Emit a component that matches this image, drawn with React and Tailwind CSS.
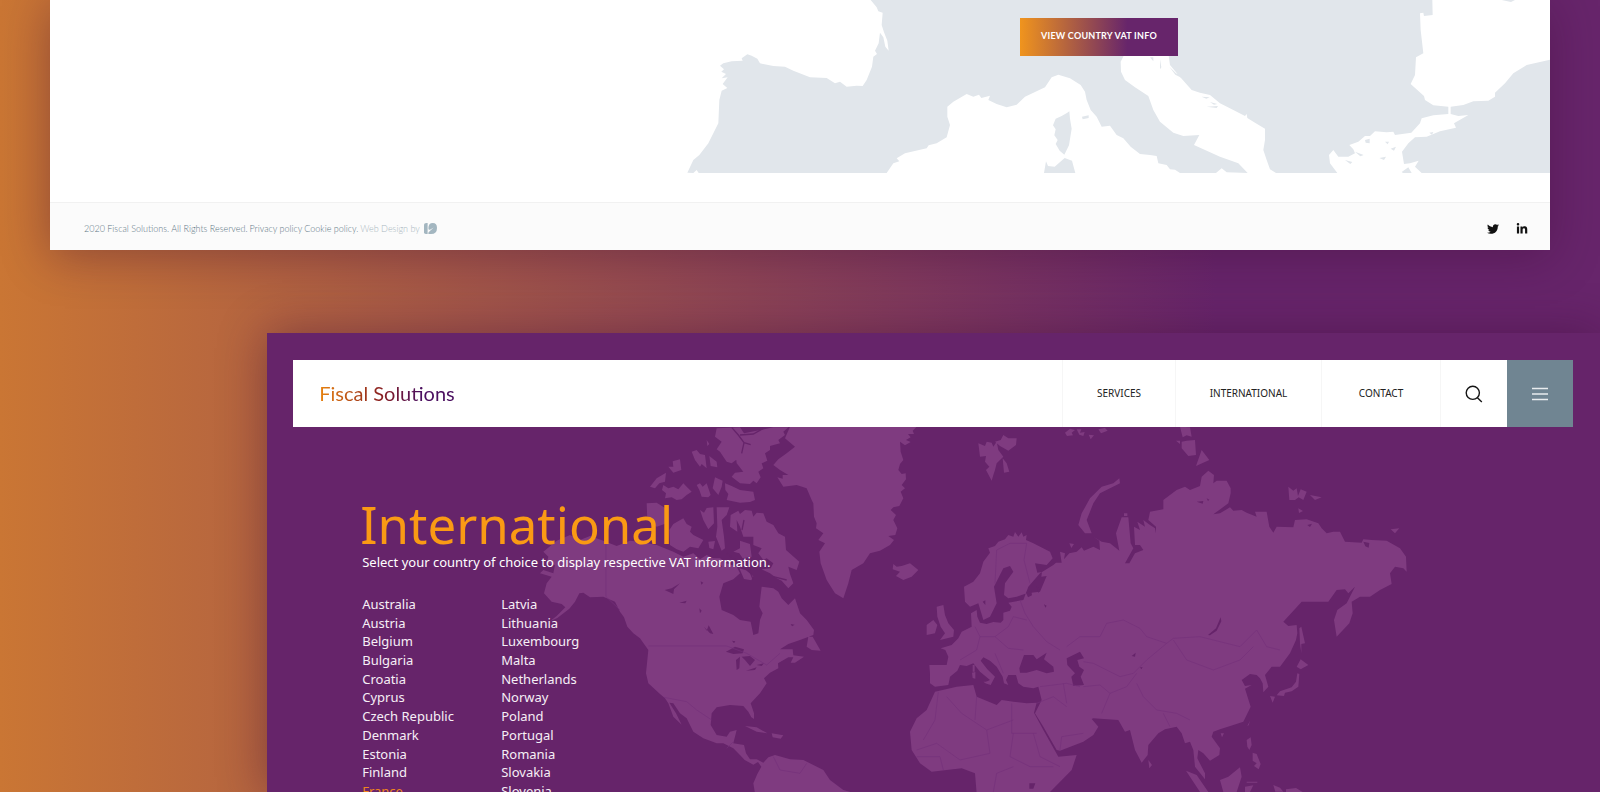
import { FaTwitter, FaLinkedinIn } from "react-icons/fa";

const countries = [
  [
    "Australia",
    "Austria",
    "Belgium",
    "Bulgaria",
    "Croatia",
    "Cyprus",
    "Czech Republic",
    "Denmark",
    "Estonia",
    "Finland",
    "France",
  ],
  [
    "Latvia",
    "Lithuania",
    "Luxembourg",
    "Malta",
    "Netherlands",
    "Norway",
    "Poland",
    "Portugal",
    "Romania",
    "Slovakia",
    "Slovenia",
  ],
];

const navItems = [
  { label: "SERVICES", width: "w-[113px]" },
  { label: "INTERNATIONAL", width: "w-[146px]" },
  { label: "CONTACT", width: "w-[119px]" },
];

export default function App() {
  return (
    <div className="flex h-screen flex-col overflow-hidden bg-[linear-gradient(90deg,#ca7634_0%,#67256b_76%)] font-['Noto_Sans',sans-serif]">
      <VatSection />
      <InternationalSection />
    </div>
  );
}

function VatSection() {
  return (
    <section className="mx-[50px] shrink-0 bg-white shadow-[0_6px_44px_rgba(60,10,50,0.38)]">
      <div className="relative h-[173px] overflow-hidden">
        <EuropeMap />
        <div className="relative flex justify-end pt-[18px] pr-[372px]">
          <button className="h-[38px] w-[158px] bg-[linear-gradient(90deg,#f0941d_0%,#67256b_68%)] pb-[3px] text-[9px] font-bold tracking-wide whitespace-nowrap text-white font-['Lato','Noto_Sans',sans-serif]">
            VIEW COUNTRY VAT INFO
          </button>
        </div>
      </div>

      <footer className="mt-[29px] flex h-12 items-center justify-between border-t border-[#f1f1f1] bg-[#fbfbfb] pr-[22px] pl-[34px] pt-1">
        <p className="flex items-center gap-0.5 text-[9px] leading-4 text-[#5f7886] font-['Lato','Noto_Sans',sans-serif]">
          <span className="font-light">2020 Fiscal Solutions. All Rights Reserved.</span>
          <a href="#privacy" className="font-light">Privacy policy</a>
          <a href="#cookies" className="font-light">Cookie policy.</a>
          <span className="font-light text-[#a9b7c0]">Web Design by</span>
          <StudioMark />
        </p>
        <div className="flex items-center gap-[17px] text-[#111111]">
          <a href="#twitter" aria-label="Twitter">
            <FaTwitter size={12} />
          </a>
          <a href="#linkedin" aria-label="LinkedIn">
            <FaLinkedinIn size={12} />
          </a>
        </div>
      </footer>
    </section>
  );
}

function InternationalSection() {
  return (
    <section className="relative mt-[83px] ml-[16.7%] min-h-0 flex-1 bg-[#66246a] pt-[27px] pr-[27px] pl-[26px] shadow-[0_0_44px_rgba(60,10,50,0.42)]">
      <WorldMap />

      <header className="relative flex h-[67px] items-stretch bg-white">
        <a href="#home" className="flex flex-1 items-center pb-0.5 pl-[26px]">
          <span className="bg-[linear-gradient(90deg,#e8830f_0%,#8a1f1f_45%,#4b1060_75%)] bg-clip-text text-[20px] leading-6 text-transparent font-['Lato',sans-serif]">
            Fiscal Solutions
          </span>
        </a>
        <nav className="flex">
          {navItems.map((item) => (
            <a
              key={item.label}
              href="#nav"
              className={`flex items-center justify-center border-l border-[#f6f6f6] text-[10px] text-[#222222] ${item.width}`}
            >
              {item.label}
            </a>
          ))}
        </nav>
        <button aria-label="Search" className="flex w-[67px] items-center justify-center border-l border-[#f6f6f6]">
          <svg width="18" height="18" viewBox="0 0 18 18" fill="none" stroke="#151515" strokeWidth="1.4">
            <circle cx="7.8" cy="7.8" r="6.6" />
            <path d="M12.2 12.6l4.6 4.4" />
          </svg>
        </button>
        <button aria-label="Menu" className="flex w-[66px] items-center justify-center bg-[#708592]">
          <svg width="16" height="14" viewBox="0 0 16 14" stroke="#e8ecee" strokeWidth="1.5">
            <path d="M0 1.5h16M0 7h16M0 12.5h16" />
          </svg>
        </button>
      </header>

      <div className="relative pt-[69px] pl-[69px]">
        <h1 className="-ml-0.5 text-[51px] leading-[56px] text-[#fa9a14]">International</h1>
        <p className="text-[13px] leading-5 text-white">
          Select your country of choice to display respective VAT information.
        </p>
        <div className="mt-[23px] flex">
          {countries.map((column) => (
            <ul key={column[0]} className="flex h-[205px] w-[139px] flex-col justify-between text-[13px] leading-[18px]">
              {column.map((country) => (
                <li key={country}>
                  <a
                    href="#country"
                    className={country === "France" ? "text-[#f0861c]" : "text-[#f6eff6]"}
                  >
                    {country}
                  </a>
                </li>
              ))}
            </ul>
          ))}
        </div>
      </div>
    </section>
  );
}

function StudioMark() {
  return (
    <svg className="ml-0.5" width="13" height="11" viewBox="0 0 13 11" fill="#a3b6c0">
      <path d="M0 2.4Q0 0 2.6 0H3.6V11H1.8Q0 11 0 9.2z" />
      <path d="M4.4 5.2Q4.4 0 8.8 0Q13 0 13 5Q13 11 7 11H4.4V9.4L9.6 4.6L6.4 6.6Q4.4 7.4 4.4 5.2z" />
    </svg>
  );
}

function EuropeMap() {
  return (
    <svg
      className="absolute inset-0 h-full w-full"
      viewBox="50 0 1500 173"
      preserveAspectRatio="xMaxYMax slice"
      aria-hidden="true"
    >
      <g transform="translate(660 0) scale(0.33333)">
        <path
          fill="#e1e6eb"
          d="M632 0L650 22L655 34L668 38L665 75L672 97L682 122L686 152L676 140L670 112L660 98L656 130L645 152L651 162L640 170L636 200L620 240L608 258L590 257L560 260L540 245L525 250L500 234L450 232L400 212L375 200L340 198L300 190L292 176L275 167L262 163L245 175L248 182L215 184L190 190L180 197L192 208L184 215L198 222L185 235L203 232L188 252L202 264L185 272L178 300L175 370L160 400L145 430L118 465L100 480L82 518L100 519L110 510L116 519L680 519L700 490L718 484L710 475L735 460L800 445L806 436L830 430L860 412L870 375L862 350L862 320L880 305L920 282L940 290L957 284L964 294L990 287L985 300L1010 312L1040 322L1070 314L1095 290L1155 262L1175 232L1195 224L1230 235L1262 255L1275 275L1280 300L1292 330L1310 350L1325 380L1350 377L1370 405L1390 415L1412 440L1440 462L1470 465L1490 468L1495 490L1520 495L1530 508L1545 509L1560 519L1668 519L1685 505L1700 517L1763 519L1735 490L1680 470L1602 435L1618 405L1570 408L1540 398L1500 365L1480 330L1465 288L1425 262L1395 240L1383 215L1382 185L1395 160L1525 160L1530 195L1555 225L1595 270L1620 278L1650 285L1680 310L1720 330L1755 348L1760 342L1762 354L1785 368L1815 386L1815 420L1810 450L1820 480L1830 508L1848 519L2032 519L2010 490L2007 465L2020 450L2035 470L2065 470L2085 460L2080 448L2068 435L2095 425L2115 408L2130 408L2145 394L2180 397L2200 395L2205 405L2254 398L2280 370L2285 355L2320 346L2365 342L2365 320L2320 316L2295 300L2292 288L2252 252L2265 225L2268 172L2290 160L2282 90L2280 40L2290 38L2292 48L2318 45L2317 0Z M2372 320L2410 315L2440 304L2485 302L2505 290L2505 278L2535 250L2560 220L2600 195L2700 172L2700 519L2285 519L2265 500L2276 482L2250 490L2232 492L2226 455L2245 430L2265 412L2300 410L2340 394L2388 383L2382 370L2425 345L2395 348L2372 342Z"
        />
        <path
          fill="#e1e6eb"
          d="M1222 338l6-4 2 22 5 30-8 50-14 28-14-12-12-20 6-12-10-14 4-18-8-12 8-20 18-8zM1158 484l6 14 20 2 30-26 22 8 10 37h-94zM1266 350l20-4v8l-18 4zM1500 178l4 24-4 6zM1470 172h10v12zM1528 200l20 20 24 10-2 6-24-12zM1625 290l24 2-10 4zM1628 304l26 4M1640 320l34-2-4 6zM1650 306l22 6-10 2zM2115 420l14-4v14l-12-2zM2175 425h12l-4 8zM2085 455l26 10-10 4zM2055 480l22 6-6 6zM2158 474l20-4-6 10zM2192 446l16-6-6 12zM2225 516l20-14 10 17h-26zM2308 398l12-2-4 8zM2525 0h40l-12 6z"
        />
      </g>
    </svg>
  );
}

function WorldMap() {
  return (
    <svg
      className="absolute inset-0 h-full w-full"
      viewBox="267 333 1333 459"
      preserveAspectRatio="xMinYMin slice"
      aria-hidden="true"
    >
      {/* Americas, Greenland and Iceland */}
      <g transform="translate(540 420) scale(0.33333)">
        <path
          fill="#7f3b80"
          d="M10 395L25 410L20 430L45 435L40 460L10 450L0 460L35 470L20 490L12 520L35 545L65 552L76 562L50 588L30 604L52 594L88 566L105 545L118 520L130 518L150 532L190 530L225 545L240 575L252 592L262 620L280 640L300 655L325 690L322 720L318 760L325 790L360 822L375 835L385 850L400 890L425 914L408 880L388 848L400 850L420 880L440 895L460 935L490 955L530 970L550 970L580 985L600 1005L614 1020L640 1034L654 1026L664 1040L652 1062L640 1090L645 1120L945 1120L910 1110L870 1080L850 1050L790 1020L750 1018L705 1005L685 1012L670 1028L650 1018L630 1018L618 1000L612 975L580 970L590 930L570 935L560 950L530 945L512 915L515 880L530 862L570 855L610 858L625 875L634 892L642 897L642 880L632 850L660 820L680 790L672 775L690 758L715 745L714 730L745 712L760 712L752 728L765 728L792 710L760 706L758 688L720 688L745 672L780 660L820 645L822 630L800 600L780 580L765 535L745 555L725 535L715 515L700 505L665 500L662 525L658 560L668 580L660 600L655 640L640 645L632 605L600 600L580 585L545 570L538 530L550 490L580 478L600 460L590 440L560 430L540 415L520 415L500 405L480 418L460 400L430 410L400 395L350 375L300 365L270 362L230 378L190 362L150 348L120 360L90 345L50 362Z M805 650L818 650L842 692L815 690L800 680Z M615 918L650 922L682 940L650 935Z M695 940L730 946L722 956L698 952Z"
        />
        <path
          fill="#7f3b80"
          d="M750 20L1130 20L1118 32L1122 42L1104 42L1112 52L1098 60L1112 66L1095 76L1080 65L1082 95L1090 120L1080 132L1075 150L1085 162L1097 160L1098 178L1085 195L1095 205L1082 215L1090 235L1078 258L1060 262L1052 270L1068 285L1060 300L1072 325L1066 345L1045 348L1062 360L1050 375L1020 392L990 400L970 430L935 450L925 490L910 535L885 520L860 480L842 430L838 395L855 370L835 360L850 340L828 325L830 310L822 290L820 250L815 240L800 205L770 195L730 200L712 172L728 176L728 165L745 165L720 150L700 135L715 118L740 100L765 80L735 55Z M1060 432L1070 440L1085 438L1110 430L1135 450L1115 470L1090 480L1068 468L1080 455L1058 448Z"
        />
        {/* Arctic archipelago */}
        <path
          fill="#7f3b80"
          d="M530 25L600 22L612 40L700 22L745 22L730 35L735 45L715 60L720 70L690 78L690 90L675 100L682 122L665 130L670 145L655 155L662 172L650 190L640 182L630 192L600 190L575 170L585 158L610 155L590 130L588 112L605 95L595 115L575 130L560 125L540 95L530 88L545 65L525 50Z M555 190L575 198L600 210L640 215L645 240L630 246L600 248L560 240L565 222L556 210Z M320 250L350 248L385 270L380 310L350 320L322 300Z M388 330L400 312L430 295L440 312L455 320L450 335L460 345L490 360L475 385L450 380L430 395L410 388L390 375Z M480 270L492 278L500 264L520 262L522 310L505 328L490 300Z M530 262L568 262L560 285L545 300L552 350L555 385L545 392L528 350L532 320Z M570 320L572 285L595 272L600 282L615 270L635 272L640 290L650 278L670 280L680 305L700 315L715 340L735 350L738 390L778 425L770 450L745 440L750 462L760 490L745 505L725 482L710 475L690 460L665 448L692 445L700 430L680 415L670 420L655 400L665 385L640 375L640 350L610 350L600 320L590 300L592 335Z M600 362L630 372L635 410L608 415L598 400L580 395L600 385Z M330 200L350 175L378 158L375 185L358 190L345 205Z M370 195L385 205L400 200L415 208L430 190L440 200L455 215L440 225L425 238L410 240L395 232L375 235L378 220L366 210Z M470 195L480 190L488 200L500 190L512 225L505 232L485 230L478 210Z M455 95L470 90L480 102L495 105L500 145L485 132L480 140L465 120Z M385 140L400 140L398 124L420 118L424 150L400 158Z M508 108L530 125L532 142L512 138Z M525 172L548 182L545 200L535 225L518 205Z M500 60l8 12-6 6zM505 365l20-2-5 25-12-4zM598 445l20 6 22 18-6 12-22-4z"
        />
        {/* fjords and channels */}
        <path
          fill="none"
          stroke="#66246a"
          strokeWidth="4"
          d="M575 22L595 45L612 68L605 100M600 45L640 42L670 25M612 68L632 74M612 300L606 330M520 420L545 440M560 400L600 430L650 420M620 430L640 480M700 470L740 480"
        />
        {/* Great Lakes and northern lakes */}
        <path
          fill="#66246a"
          d="M558 695L585 680L612 688L608 700L580 702ZM590 750L588 720L600 710L598 745ZM605 710L630 708L645 720L630 738L615 720ZM618 752L650 742L645 750ZM650 735L672 730L665 738ZM374 510L395 505L420 490L402 508L400 522ZM418 548L440 542L436 550ZM492 620L500 632L506 616L520 642L510 640ZM478 565L485 572L480 580ZM482 484l8 4-6 6zM752 612l12 2-8 5zM576 662l10 2-4 6z"
        />
        <path
          fill="none"
          stroke="#74317a"
          strokeWidth="2"
          d="M198 370V530L240 570M325 678H560L620 700L680 735L720 700M372 832L440 845L470 870L515 900M560 985L580 965M700 1010L720 1050L780 1060L800 1030"
        />
      </g>

      {/* Europe, Asia and Africa */}
      <g transform="translate(880 420) scale(0.33333)">
        <path
          fill="#7f3b80"
          d="M252 500L255 545L270 560L295 550L310 600L330 590L350 550L342 500L370 445L390 438L400 455L375 490L372 525L385 535L410 530L440 520L480 515L500 468L484 470L486 456L472 458L465 430L500 435L518 415L510 395L460 370L438 360L440 345L430 350L425 337L415 350L405 336L400 350L385 345L375 358L355 365L345 378L325 385L330 398L310 425L300 460L280 485Z M148 735L200 735L205 710L196 690L182 685L215 675L235 655L245 635L275 620L273 580L290 570L292 590L300 608L320 612L340 606L362 608L370 600L370 578L390 572L395 560L385 548L430 540L445 500L480 460L520 435L528 428L545 428L540 395L555 400L552 418L568 400L590 395L605 382L612 392L640 380L660 390L658 362L640 350L665 365L690 370L718 392L708 340L725 292L745 292L752 370L760 385L735 430L748 430L765 400L790 390L780 375L765 375L762 320L780 330L772 305L795 320L790 300L810 315L825 325L828 340L828 320L805 300L810 275L850 268L850 240L890 210L915 200L930 210L960 198L965 170L985 152L1002 165L1000 190L1010 182L1040 182L1052 205L1052 220L1045 250L1000 283L1020 280L1050 262L1060 272L1085 270L1100 278L1130 290L1125 275L1160 275L1168 320L1180 338L1190 320L1240 322L1245 300L1280 298L1315 310L1325 325L1340 340L1360 335L1380 335L1395 365L1445 368L1450 358L1475 360L1520 362L1560 385L1578 410L1580 455L1570 445L1545 440L1530 460L1535 492L1500 510L1470 530L1440 530L1415 545L1418 580L1408 610L1370 650L1362 600L1372 570L1400 550L1425 500L1405 520L1395 508L1370 510L1345 545L1265 545L1210 605L1225 618L1250 615L1252 640L1248 660L1230 700L1200 740L1175 740L1155 765L1165 800L1150 817L1148 790L1140 775L1130 765L1110 762L1085 780L1095 798L1115 795L1095 806L1112 860L1090 905L1060 915L1020 928L1000 935L995 950L1020 985L1018 1005L990 1022L970 1000L955 990L952 1015L975 1060L975 1078L945 1040L940 990L930 965L915 970L905 940L890 920L855 928L835 940L805 975L803 1005L785 1028L765 990L750 930L735 935L715 900L640 895L615 905L595 895L568 862L580 858L605 885L625 885L655 920L640 945L610 965L540 992L530 990L490 920L465 880L485 840L475 800L460 805L430 800L415 790L408 765L385 765L378 780L385 795L372 790L368 770L350 740L330 722L310 712L302 722L322 748L345 770L332 795L312 788L330 780L300 755L280 730L260 738L240 735L232 752L210 770L205 795L165 800L150 790L150 760Z M165 815L230 800L280 795L290 830L350 855L365 840L400 845L440 850L470 848L462 878L490 930L535 1010L590 1005L575 1050L510 1116L290 1120L285 1060L245 1045L155 1055L120 1030L95 990L90 935L110 895L140 870Z"
        />
        <path
          fill="#7f3b80"
          d="M170 560L190 555L195 585L205 610L222 630L220 650L180 660L195 640L182 620L172 590Z M140 615L160 600L172 615L165 640L140 645Z M295 70L315 78L320 65L335 68L340 80L350 65L355 90L370 110L350 130L345 150L340 165L335 182L318 150L328 140L315 125L318 108L300 110Z M345 65L362 60L370 45L385 55L410 55L408 75L385 92L360 78Z M368 115L380 130L388 155L372 158Z M718 175L720 190L690 205L660 220L640 250L620 300L635 340L615 340L595 315L605 280L630 235L665 200L700 190Z M555 38l15-12 15 4-10 8 4 8-18 2zM590 28h14l-4 10 14-2-4 12-12-4zM626 44l16 2-10 12zM655 28l20-4 8 8-20 8zM900 20L930 22L935 50L920 46L908 52Z M888 62h12v10zM905 65L920 62L945 60L948 105L925 108L905 85Z M965 90L988 120L948 138Z M1225 200L1240 212L1250 205L1254 228L1262 208L1280 215L1270 240L1256 232L1245 240L1228 240Z M1290 225L1325 232L1305 240Z M1255 265l14 8-12 6zM1532 328L1558 325L1545 340Z M1258 625L1264 620L1275 670L1264 672L1264 700L1260 670Z M1250 740L1262 718L1285 735L1262 748Z M1252 760L1258 762L1255 800L1235 814L1215 818L1212 828L1190 826L1200 814L1235 802L1248 785Z M1170 828L1185 830L1178 848Z M1102 918L1110 902L1106 916Z M1022 940l10 0-6 12zM1100 960L1112 952L1115 975L1108 990L1102 980ZM1118 998l12 4 8 20 4 10-6 16-14-10 8-8-12-8zM805 1020L816 1035L808 1045Z M918 1052L950 1065L985 1116L960 1116Z M1020 1080L1045 1070L1080 1042L1085 1070L1070 1116L1030 1116Z M1100 1085h32v3h-32zM1095 1100l25-4-10 20h-15zM1180 1095l20 8 10 12h-24zM1218 1108l30-4 20 12h-50zM278 735h6v20h-6zM276 758l10-2v20l-8-2zM310 785h20l-4 8zM568 370l14 2-8 12zM732 280h10v8h-10z"
        />
        {/* inland seas */}
        <path
          fill="#66246a"
          d="M418 745L432 705L460 705L470 718L500 698L492 718L520 740L522 755L500 760L470 750L440 758L420 758Z M560 715L600 695L612 715L592 720L598 740L612 750L602 770L612 795L580 798L574 770L585 760L562 735Z M984 645L1008 625L1022 592L1024 604L1010 632L990 646ZM950 245l20-2-2 8zM980 235l8 4-4 4zM438 518l16-6 2 14-12 6zM470 500l10 6-4 14zM492 553l8 4-4 6zM755 708l12-10-2 12zM780 742h8l-4 6zM308 545l8-4 0 14zM448 1090L466 1090L460 1106L448 1106Z M1282 315l14-4-6 10zM1450 365l18 4-2 14-10-4z"
        />
        <path
          fill="none"
          stroke="#74317a"
          strokeWidth="2"
          d="M345 490L350 390L390 370L440 370L432 420L450 490M420 540L435 580L460 620L500 665L540 690M285 620L300 650L345 650L385 620L400 590L440 600M300 650L290 690L240 720M345 650L385 685L430 690M345 700L370 760M560 680L600 650L660 650L680 610L730 600L780 625L800 650L860 670L880 655L960 650L1080 680L1130 630L1160 680L1200 690M880 660L920 720L1000 750L1080 720L1120 680M860 670L800 720L760 760L720 770L680 750L640 730L610 725M610 800L660 795L690 820L740 800L770 760M690 820L665 880M770 790L790 830L830 870L890 880L930 900M850 880L870 920M480 800L560 790L600 800M550 790L560 850M470 850L520 830L560 860M540 990L545 950L610 940M175 815L165 900L130 960M200 830L245 880L320 930L400 900M290 830L285 900M395 850V940L470 940M320 930L330 1000L240 1020L170 970L110 990M400 940L390 1010L450 1040L520 1040M460 940L480 1010L540 1040M110 1010L180 1010L190 1050M340 1116L350 1060L400 1040"
        />
      </g>
    </svg>
  );
}
